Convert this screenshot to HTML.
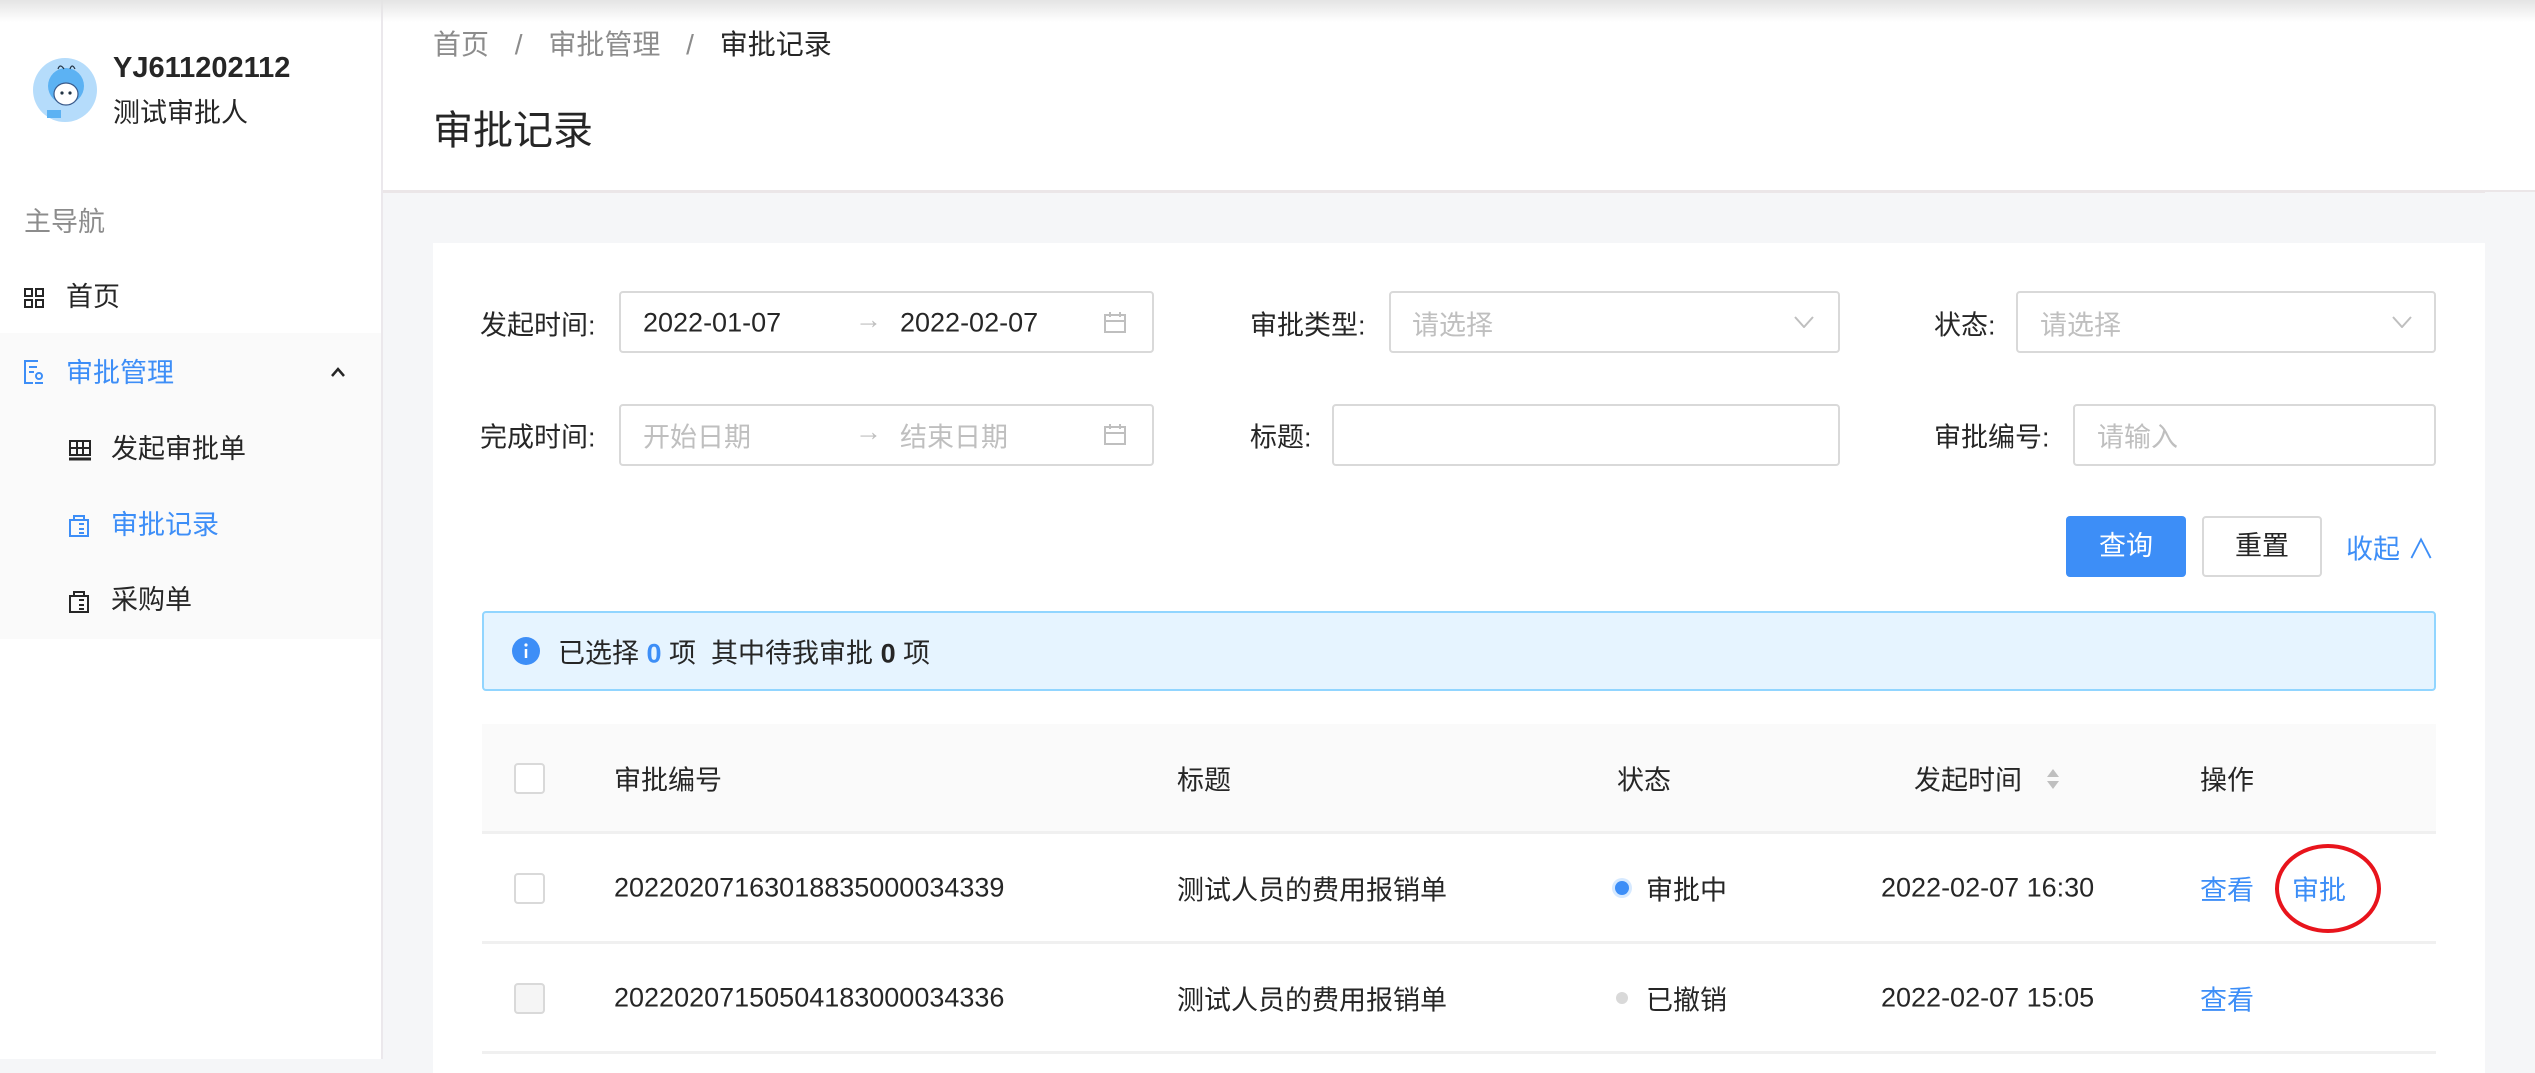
<!DOCTYPE html>
<html><head><meta charset="utf-8"><style>
*{margin:0;padding:0;box-sizing:border-box}
body{width:2535px;height:1059px;overflow:hidden;background:#f5f6f8;font-family:"Liberation Sans","Noto Sans CJK SC",sans-serif;color:#262626;font-size:27px;position:relative}
.a{position:absolute;white-space:nowrap}
.side{position:absolute;left:0;top:0;width:383px;height:1059px;background:#fff;border-right:2px solid #ebe8ec}
.hdr{position:absolute;left:383px;top:0;width:2152px;height:193px;background:#fff;border-bottom:3px solid #ebe6e8}
.shadow{position:absolute;left:0;top:0;width:2535px;height:22px;background:linear-gradient(#e4e4e4,rgba(255,255,255,0))}
.card{position:absolute;left:433px;top:243px;width:2052px;height:830px;background:#fff}
.inp{position:absolute;border:2px solid #d9d9d9;border-radius:4px;background:#fff}
.ph{color:#bfbfbf}
.blue{color:#3d8ef7}
.lbl{position:absolute;white-space:nowrap;transform:translateY(-50%)}
.cb{position:absolute;width:31px;height:31px;border:2px solid #d9d9d9;border-radius:4px;background:#fff}
.line{position:absolute;left:482px;width:1954px;height:3px;background:#f0f0f0}
</style></head><body>
<div class="side">
  <svg class="a" style="left:33px;top:58px" width="64" height="64" viewBox="0 0 64 64">
    <circle cx="32" cy="32" r="32" fill="#b5dcfb"/>
    <circle cx="33" cy="28" r="18" fill="#5cb2f3"/>
    <ellipse cx="33" cy="36" rx="12" ry="11" fill="#fff" stroke="#3a5a8a" stroke-width="1.2"/>
    <circle cx="29" cy="35" r="1.6" fill="#234"/><circle cx="37" cy="35" r="1.6" fill="#234"/>
    <path d="M25 11 q2-6 6 0 M37 11 q2-6 5 0" stroke="#234" fill="none" stroke-width="1.2"/>
    <path d="M14 52 h14 v8 h-14z" fill="#5cb2f3"/>
  </svg>
  <div class="a" style="left:113px;top:51px;font-weight:bold;font-size:29px;line-height:34px">YJ611202112</div>
  <div class="a" style="left:113px;top:95px;font-size:27px;line-height:36px">测试审批人</div>
  <div class="a" style="left:24px;top:204px;color:#8c8c8c;line-height:36px">主导航</div>
  <svg class="a" style="left:24px;top:288px" width="20" height="20" viewBox="0 0 20 20" fill="none" stroke="#262626" stroke-width="2"><rect x="1" y="1" width="7" height="7"/><rect x="12" y="1" width="7" height="7"/><rect x="1" y="12" width="7" height="7"/><rect x="12" y="12" width="7" height="7"/></svg>
  <div class="a" style="left:66px;top:279px;line-height:36px">首页</div>
  <div class="a" style="left:0;top:333px;width:381px;height:306px;background:#fafafa"></div>
  <svg class="a" style="left:24px;top:360px" width="20" height="24" viewBox="0 0 20 24" fill="none" stroke="#3d8ef7" stroke-width="2"><path d="M14 1H1v22h8M5 7h8M5 12h5"/><circle cx="15" cy="16" r="3"/><path d="M11 23h8"/></svg>
  <div class="a blue" style="left:66px;top:355px;line-height:36px">审批管理</div>
  <svg class="a" style="left:330px;top:366px" width="16" height="12" viewBox="0 0 16 12" fill="none" stroke="#262626" stroke-width="2.5"><path d="M2 10l6-7 6 7"/></svg>
  <svg class="a" style="left:68px;top:439px" width="24" height="22" viewBox="0 0 24 22" fill="none" stroke="#262626" stroke-width="2"><path d="M2 2h20v14H2zM2 9h20M9 2v14M15 2v14"/><path d="M1 20h22" stroke-width="3"/></svg>
  <div class="a" style="left:111px;top:431px;line-height:36px">发起审批单</div>
  <svg class="a" style="left:68px;top:512px" width="22" height="26" viewBox="0 0 22 26" fill="none" stroke="#3d8ef7" stroke-width="2"><path d="M6 4h10v4H6zM2 8h18v16H2zM11 12h5M11 17h5M11 21h5"/></svg>
  <div class="a blue" style="left:111px;top:507px;line-height:36px">审批记录</div>
  <svg class="a" style="left:68px;top:588px" width="22" height="26" viewBox="0 0 22 26" fill="none" stroke="#262626" stroke-width="2"><path d="M6 4h10v4H6zM2 8h18v16H2zM11 12h5M11 17h5M11 21h5"/></svg>
  <div class="a" style="left:111px;top:582px;line-height:36px">采购单</div>
</div>
<div class="hdr">
  <div class="a" style="left:50px;top:27px;font-size:28px;line-height:36px;color:#8c8c8c">首页 <span style="margin:0 18px">/</span> 审批管理 <span style="margin:0 18px">/</span> <span style="color:#262626">审批记录</span></div>
  <div class="a" style="left:50px;top:108px;font-size:40px;line-height:46px">审批记录</div>
</div>
<div class="shadow"></div>
<div class="a" style="left:2485px;top:192px;width:50px;height:867px;background:#f5f6f8"></div>
<div class="card"></div>

<div class="lbl" style="left:480px;top:323px">发起时间:</div>
<div class="inp" style="left:619px;top:291px;width:535px;height:62px"></div>
<div class="lbl" style="left:643px;top:323px">2022-01-07</div>
<div class="lbl ph" style="left:855px;top:320px">→</div>
<div class="lbl" style="left:900px;top:323px">2022-02-07</div>
<svg class="a" style="left:1104px;top:312px" width="22" height="22" viewBox="0 0 22 22" fill="none" stroke="#bfbfbf" stroke-width="2"><rect x="1" y="3" width="20" height="17"/><path d="M1 9h20M6 0v5M16 0v5"/></svg>
<div class="lbl" style="left:1250px;top:323px">审批类型:</div>
<div class="inp" style="left:1389px;top:291px;width:451px;height:62px"></div>
<div class="lbl ph" style="left:1412px;top:323px">请选择</div>
<svg class="a" style="left:1794px;top:316px" width="20" height="12" viewBox="0 0 20 12" fill="none" stroke="#bfbfbf" stroke-width="2"><path d="M1 1l9 10 9-10"/></svg>
<div class="lbl" style="left:1934px;top:323px">状态:</div>
<div class="inp" style="left:2016px;top:291px;width:420px;height:62px"></div>
<div class="lbl ph" style="left:2040px;top:323px">请选择</div>
<svg class="a" style="left:2392px;top:316px" width="20" height="12" viewBox="0 0 20 12" fill="none" stroke="#bfbfbf" stroke-width="2"><path d="M1 1l9 10 9-10"/></svg>

<div class="lbl" style="left:480px;top:435px">完成时间:</div>
<div class="inp" style="left:619px;top:404px;width:535px;height:62px"></div>
<div class="lbl ph" style="left:643px;top:435px">开始日期</div>
<div class="lbl ph" style="left:855px;top:432px">→</div>
<div class="lbl ph" style="left:900px;top:435px">结束日期</div>
<svg class="a" style="left:1104px;top:424px" width="22" height="22" viewBox="0 0 22 22" fill="none" stroke="#bfbfbf" stroke-width="2"><rect x="1" y="3" width="20" height="17"/><path d="M1 9h20M6 0v5M16 0v5"/></svg>
<div class="lbl" style="left:1250px;top:435px">标题:</div>
<div class="inp" style="left:1332px;top:404px;width:508px;height:62px"></div>
<div class="lbl" style="left:1934px;top:435px">审批编号:</div>
<div class="inp" style="left:2073px;top:404px;width:363px;height:62px"></div>
<div class="lbl ph" style="left:2097px;top:435px">请输入</div>

<div class="a" style="left:2066px;top:516px;width:120px;height:61px;background:#3d8ef7;border-radius:4px;color:#fff;text-align:center;line-height:61px">查询</div>
<div class="a" style="left:2202px;top:516px;width:120px;height:61px;border:2px solid #d9d9d9;border-radius:4px;text-align:center;line-height:57px;background:#fff">重置</div>
<div class="lbl blue" style="left:2346px;top:547px">收起 ∧</div>

<div class="a" style="left:482px;top:611px;width:1954px;height:80px;background:#e6f4ff;border:2px solid #91d5ff;border-radius:4px"></div>
<svg class="a" style="left:512px;top:637px" width="28" height="28" viewBox="0 0 28 28"><circle cx="14" cy="14" r="14" fill="#3d8ef7"/><path d="M14 12v9" stroke="#fff" stroke-width="2.5"/><circle cx="14" cy="8" r="1.6" fill="#fff"/></svg>
<div class="lbl" style="left:558px;top:651px">已选择 <span class="blue" style="font-weight:bold">0</span> 项&nbsp; 其中待我审批 <b>0</b> 项</div>

<div class="a" style="left:482px;top:724px;width:1954px;height:108px;background:#fafafa"></div>
<div class="line" style="top:831px"></div>
<div class="line" style="top:941px"></div>
<div class="line" style="top:1051px"></div>
<div class="cb" style="left:514px;top:763px"></div>
<div class="lbl" style="left:614px;top:778px">审批编号</div>
<div class="lbl" style="left:1177px;top:778px">标题</div>
<div class="lbl" style="left:1617px;top:778px">状态</div>
<div class="lbl" style="left:1914px;top:778px">发起时间</div>
<svg class="a" style="left:2045px;top:767px" width="16" height="24" viewBox="0 0 16 24" fill="#bfbfbf"><path d="M8 2l6 8H2zM8 22l6-8H2z"/></svg>
<div class="lbl" style="left:2200px;top:778px">操作</div>

<div class="cb" style="left:514px;top:873px"></div>
<div class="lbl" style="left:614px;top:888px">20220207163018835000034339</div>
<div class="lbl" style="left:1177px;top:888px">测试人员的费用报销单</div>
<div class="a" style="left:1615px;top:881px;width:14px;height:14px;border-radius:50%;background:#3d8ef7;box-shadow:0 0 0 3px #d6e9ff"></div>
<div class="lbl" style="left:1646px;top:888px">审批中</div>
<div class="lbl" style="left:1881px;top:888px">2022-02-07 16:30</div>
<div class="lbl blue" style="left:2200px;top:888px">查看</div>
<div class="lbl blue" style="left:2292px;top:888px">审批</div>
<div class="a" style="left:2275px;top:844px;width:106px;height:89px;border:4px solid #e8141c;border-radius:50%"></div>

<div class="cb" style="left:514px;top:983px;background:#f5f5f5"></div>
<div class="lbl" style="left:614px;top:998px">20220207150504183000034336</div>
<div class="lbl" style="left:1177px;top:998px">测试人员的费用报销单</div>
<div class="a" style="left:1616px;top:992px;width:12px;height:12px;border-radius:50%;background:#d9d9d9"></div>
<div class="lbl" style="left:1646px;top:998px">已撤销</div>
<div class="lbl" style="left:1881px;top:998px">2022-02-07 15:05</div>
<div class="lbl blue" style="left:2200px;top:998px">查看</div>
</body></html>
